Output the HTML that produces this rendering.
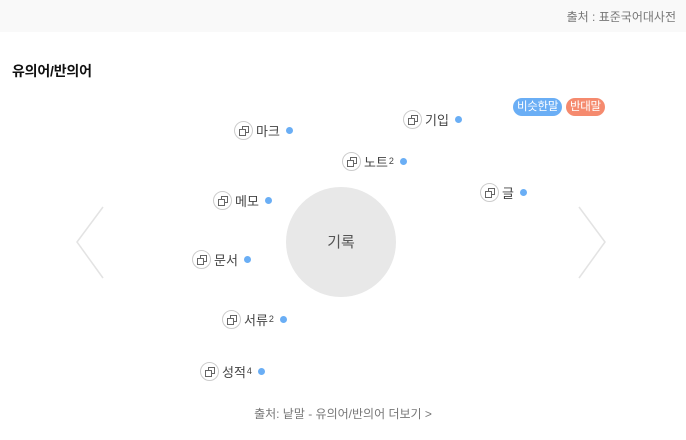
<!DOCTYPE html>
<html><head><meta charset="utf-8"><style>
*{margin:0;padding:0;box-sizing:border-box}
body{width:686px;height:440px;background:#fff;font-family:"Liberation Sans","Noto Sans CJK KR",sans-serif;position:relative;overflow:hidden;color:#333}
.top{position:absolute;left:0;top:0;width:686px;height:32px;background:#f9f9f9}
.src{position:absolute;right:10px;top:8px;font-size:12px;color:#777}
.title{position:absolute;left:12px;top:61px;font-size:14px;font-weight:bold;color:#111;letter-spacing:-0.2px}
.it{position:absolute;display:flex;align-items:center;font-size:13px;color:#444;height:20px}
.ic{width:19px;height:19px;border:1px solid #ccc;border-radius:50%;margin-right:3px;position:relative;background:#fff}
.ic svg{position:absolute;left:4px;top:4px}
.dot{width:7px;height:7px;border-radius:50%;background:#6aaef5;margin-left:6px}
sup{font-size:9px;vertical-align:6px;margin-left:1px}
.c{position:absolute;left:286px;top:187px;width:110px;height:110px;border-radius:50%;background:#e8e8e8;font-size:15px;color:#555;text-align:center;line-height:112px}
.b{position:absolute;top:98px;height:18px;border-radius:9px;color:#fff;font-size:11.5px;line-height:18px;padding:0 4px;letter-spacing:-0.3px}
.foot{position:absolute;left:0;width:686px;text-align:center;top:405px;font-size:12px;color:#777}
</style></head><body>
<div class="top"><div class="src">출처 : 표준국어대사전</div></div>
<div class="title">유의어/반의어</div>
<div class="b" style="left:513px;background:#6aaef5">비슷한말</div>
<div class="b" style="left:566px;background:#f58a6e">반대말</div>
<svg style="position:absolute;left:0;top:0" width="686" height="440"><polyline points="103,207 77,242 103,278" fill="none" stroke="#e3e3e3" stroke-width="1.5"/><polyline points="579,207 605,242 579,278" fill="none" stroke="#e3e3e3" stroke-width="1.5"/></svg>
<div class="c">기록</div>
<div class="it" style="left:234px;top:120px"><span class="ic"><svg width="10" height="10" viewBox="0 0 10 10" fill="none" stroke="#666"><rect x="3.5" y="0.5" width="6" height="6"/><rect x="0.5" y="3.5" width="6" height="6" fill="#fff"/></svg></span>마크<span class="dot"></span></div>
<div class="it" style="left:403px;top:109px"><span class="ic"><svg width="10" height="10" viewBox="0 0 10 10" fill="none" stroke="#666"><rect x="3.5" y="0.5" width="6" height="6"/><rect x="0.5" y="3.5" width="6" height="6" fill="#fff"/></svg></span>기입<span class="dot"></span></div>
<div class="it" style="left:342px;top:151px"><span class="ic"><svg width="10" height="10" viewBox="0 0 10 10" fill="none" stroke="#666"><rect x="3.5" y="0.5" width="6" height="6"/><rect x="0.5" y="3.5" width="6" height="6" fill="#fff"/></svg></span>노트<sup>2</sup><span class="dot"></span></div>
<div class="it" style="left:480px;top:182px"><span class="ic"><svg width="10" height="10" viewBox="0 0 10 10" fill="none" stroke="#666"><rect x="3.5" y="0.5" width="6" height="6"/><rect x="0.5" y="3.5" width="6" height="6" fill="#fff"/></svg></span>글<span class="dot"></span></div>
<div class="it" style="left:213px;top:190px"><span class="ic"><svg width="10" height="10" viewBox="0 0 10 10" fill="none" stroke="#666"><rect x="3.5" y="0.5" width="6" height="6"/><rect x="0.5" y="3.5" width="6" height="6" fill="#fff"/></svg></span>메모<span class="dot"></span></div>
<div class="it" style="left:192px;top:249px"><span class="ic"><svg width="10" height="10" viewBox="0 0 10 10" fill="none" stroke="#666"><rect x="3.5" y="0.5" width="6" height="6"/><rect x="0.5" y="3.5" width="6" height="6" fill="#fff"/></svg></span>문서<span class="dot"></span></div>
<div class="it" style="left:222px;top:309px"><span class="ic"><svg width="10" height="10" viewBox="0 0 10 10" fill="none" stroke="#666"><rect x="3.5" y="0.5" width="6" height="6"/><rect x="0.5" y="3.5" width="6" height="6" fill="#fff"/></svg></span>서류<sup>2</sup><span class="dot"></span></div>
<div class="it" style="left:200px;top:361px"><span class="ic"><svg width="10" height="10" viewBox="0 0 10 10" fill="none" stroke="#666"><rect x="3.5" y="0.5" width="6" height="6"/><rect x="0.5" y="3.5" width="6" height="6" fill="#fff"/></svg></span>성적<sup>4</sup><span class="dot"></span></div>
<div class="foot">출처: 낱말 - 유의어/반의어 더보기 &gt;</div>
</body></html>
